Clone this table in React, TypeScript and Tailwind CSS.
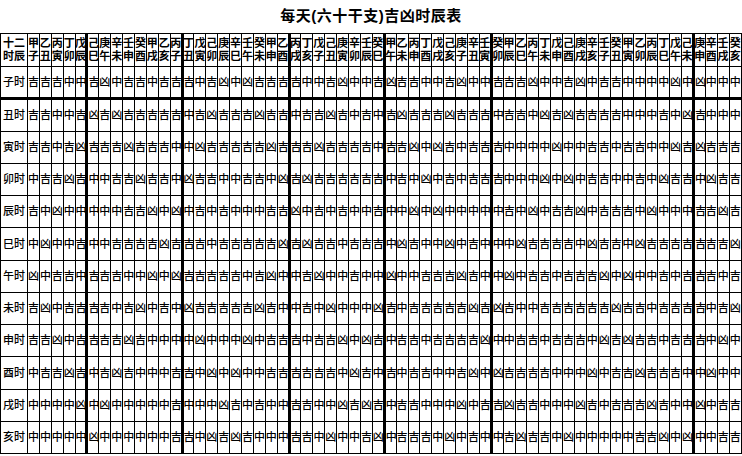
const stems = "甲乙丙丁戊己庚辛壬癸";
const branches = "子丑寅卯辰巳午未申酉戌亥";

// 60 jiazi in order
const ganzhi = Array.from({ length: 60 }, (_, i) => stems[i % 10] + branches[i % 12]);

const rows: { label: string; data: string }[] = [
  { label: "子时", data: "吉吉吉中中吉凶中吉吉中吉吉" + "吉" + "中吉凶中凶吉吉吉吉中中吉凶中中" + "吉凶吉吉中中吉凶中中吉吉吉凶中中" + "吉凶中吉吉中中中中凶中凶中中中" },
  { label: "丑时", data: "吉吉中中吉凶吉凶吉吉吉吉吉" + "中" + "吉凶吉吉吉凶吉吉中吉吉凶吉中吉" + "中吉凶吉吉吉凶吉吉吉中吉吉中凶吉" + "凶吉吉吉吉中中中吉中凶吉中中中" },
  { label: "寅时", data: "吉吉中吉凶吉吉吉凶吉吉吉中" + "中" + "凶吉吉吉吉吉凶吉吉吉凶吉吉吉吉" + "中吉吉凶中凶吉中吉吉吉中中中中凶" + "中中吉吉中吉吉中中凶吉凶吉吉吉" },
  { label: "卯时", data: "中吉吉凶吉中中吉吉凶吉吉中" + "凶" + "吉吉中中吉吉中凶吉凶吉吉吉吉吉" + "吉中吉中凶中吉中吉吉吉中中中凶中" + "凶中吉吉中中吉中凶吉吉中凶吉吉" },
  { label: "辰时", data: "吉中凶中中中中中吉吉凶中凶" + "中" + "吉中吉中中中吉吉凶中吉中吉中中" + "吉中中凶中凶中中中中中吉中凶中吉" + "吉凶中吉吉吉中凶中中中吉吉凶吉" },
  { label: "巳时", data: "中凶中中吉中中吉吉吉吉凶吉" + "吉" + "吉中吉吉吉吉吉凶吉凶吉吉中吉吉" + "吉中凶吉中中凶中吉中中中凶吉吉吉" + "吉中凶吉吉中凶吉吉吉吉吉吉吉凶" },
  { label: "午时", data: "凶中吉吉中吉吉吉中中凶中凶" + "吉" + "吉吉吉吉中吉凶中中吉凶中中吉中" + "中凶中中吉吉吉凶吉中中凶中吉吉中" + "吉吉吉凶中凶中中吉中吉吉吉中吉" },
  { label: "未时", data: "吉凶中吉吉吉吉中吉凶中吉中" + "凶" + "吉吉吉吉吉凶吉中中吉中凶中中中" + "凶吉中吉吉吉吉吉凶吉凶吉中中吉吉" + "吉吉吉吉凶吉吉中吉吉吉吉中吉凶" },
  { label: "申时", data: "吉吉凶中吉吉吉吉凶吉中中中" + "中" + "凶中中中凶中吉吉吉中吉吉凶中凶" + "吉中吉吉中吉吉吉吉凶中中吉吉中吉" + "吉吉中凶吉凶吉吉中吉吉吉中凶中" },
  { label: "酉时", data: "中吉吉凶吉中吉凶吉中中中吉" + "吉" + "中凶中凶中中吉吉吉吉吉吉中凶吉" + "中吉中吉吉中中吉凶中凶吉吉吉吉中" + "中中凶中吉吉凶吉吉吉中中凶中中" },
  { label: "戌时", data: "中中中中凶中凶中中中中中吉" + "中" + "中中凶吉中吉中中吉吉中中凶吉凶" + "吉中吉吉中中中凶中吉吉凶吉吉中中" + "中凶吉中吉吉吉凶吉中中凶中吉吉" },
  { label: "亥时", data: "中中中中中凶中中中中中中吉" + "吉" + "中凶吉凶吉中中中吉吉中凶中中吉" + "凶中吉吉吉中凶中吉中中吉凶吉吉中" + "凶中中中中中吉吉凶中凶中中吉吉" },
];

// columns followed by a heavy rule (1-based)
const heavy = new Set([5, 13, 22, 30, 39, 56]);

const font = { fontFamily: '"Liberation Sans", "Noto Sans CJK SC", sans-serif' };

export default function App() {
  return (
    <div className="w-[742px] h-[456px] bg-white text-black overflow-hidden antialiased" style={font}>
      <div className="h-[33px] flex items-center justify-center text-[15px] font-bold tracking-[0.5px]">
        每天(六十干支)吉凶时辰表
      </div>
      <table className="w-[742px] table-fixed border-collapse">
        <colgroup>
          <col className="w-[27px]" />
          {ganzhi.map((g) => (
            <col key={g} />
          ))}
        </colgroup>
        <thead>
          <tr className="h-[33px]">
            <th className="border border-black p-0 font-bold">
              <div className="flex flex-col items-center text-[11px] leading-[13px]">
                <span>十二</span>
                <span>时辰</span>
              </div>
            </th>
            {ganzhi.map((g, i) => (
              <th
                key={g}
                className={
                  heavy.has(i + 1)
                    ? "border border-black border-r-[3px] p-0 font-bold"
                    : "border border-black p-0 font-bold"
                }
              >
                <div className="flex flex-col items-center text-[11px] leading-[13px]">
                  <span>{g[0]}</span>
                  <span>{g[1]}</span>
                </div>
              </th>
            ))}
          </tr>
        </thead>
        <tbody>
          {rows.map((r, ri) => (
            <tr key={r.label} className="h-[32.25px]">
              <td
                className={
                  ri === 0
                    ? "border border-black border-b-[3px] p-0 text-center text-[11px] font-medium"
                    : "border border-black p-0 text-center text-[11px] font-medium"
                }
              >
                {r.label}
              </td>
              {Array.from(r.data).map((c, ci) => {
                let cls = "border border-black p-0 text-center text-[11px] font-medium";
                if (heavy.has(ci + 1)) cls += " border-r-[3px]";
                if (ri === 0) cls += " border-b-[3px]";
                return (
                  <td key={ci} className={cls}>
                    {c}
                  </td>
                );
              })}
            </tr>
          ))}
        </tbody>
      </table>
    </div>
  );
}
